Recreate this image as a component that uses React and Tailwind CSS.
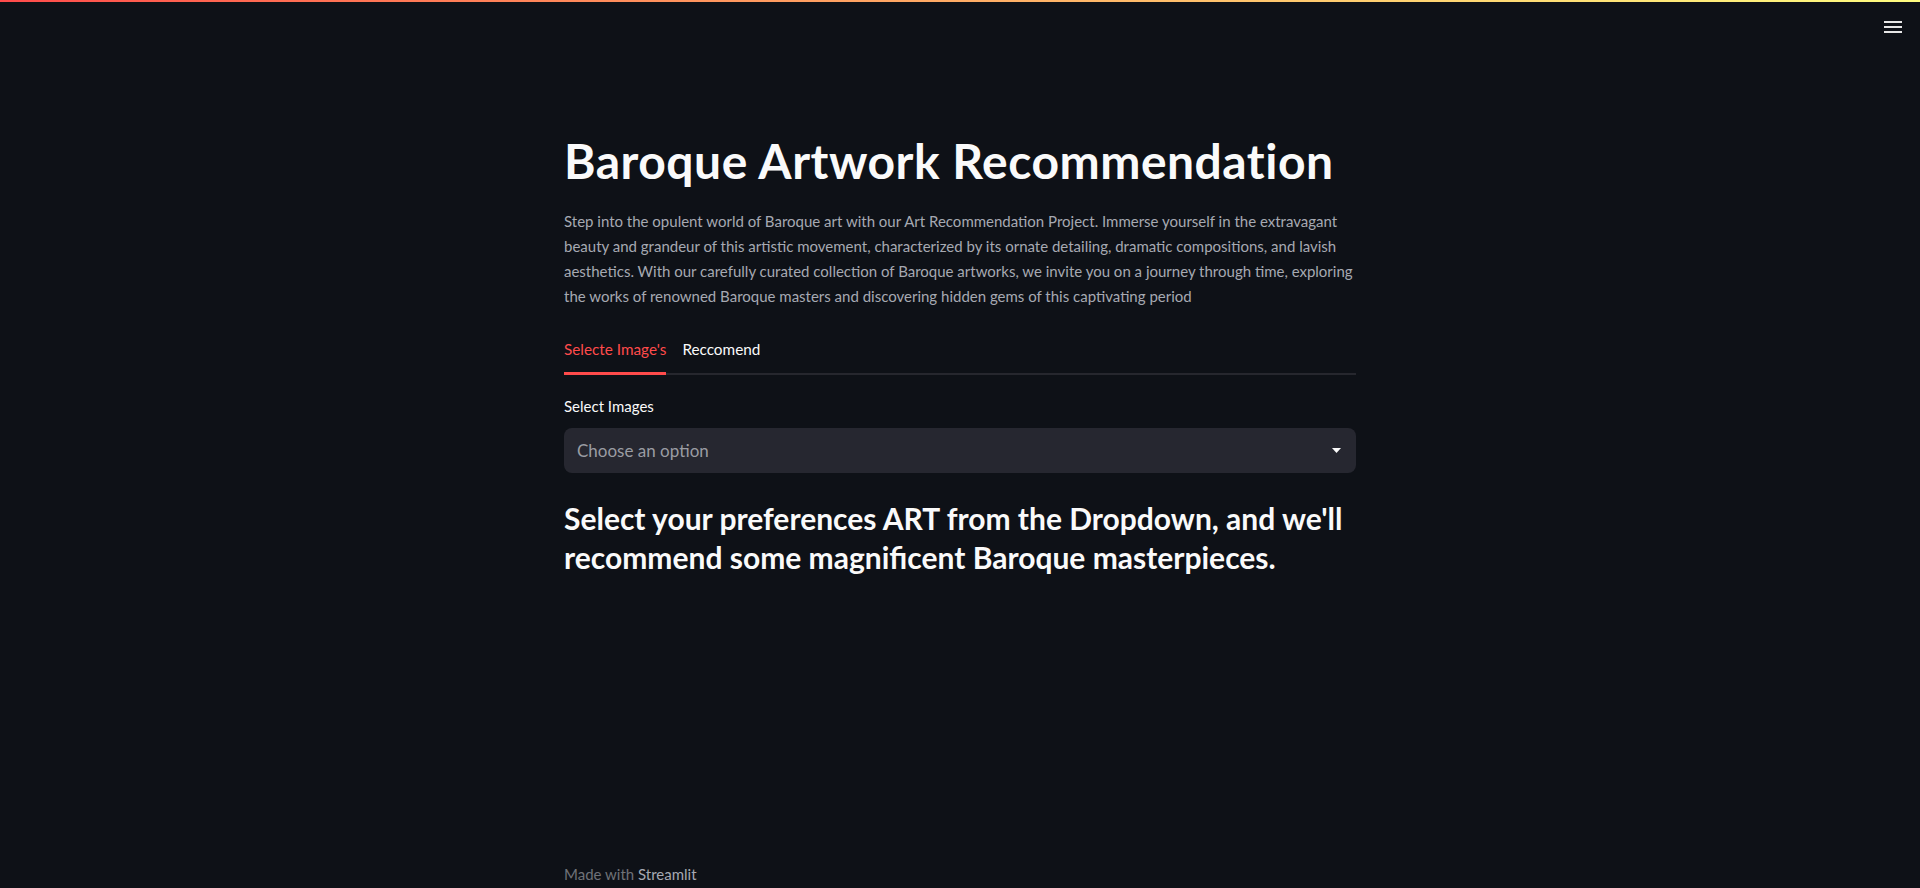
import React from "react";

export default function App() {
  const font = { fontFamily: "Lato, 'Noto Sans', sans-serif" };
  return (
    <div className="min-h-[888px] w-full bg-[#0e1117] text-[#fafafa] relative" style={font}>
      <div className="h-[2px] w-full bg-gradient-to-r from-[#ff4b4b] to-[#fffd80]" />
      <button className="absolute right-[18px] top-[21px] flex flex-col gap-[3px] w-[18px]">
        <span className="block h-[2px] w-[18px] bg-[#e6e6e6]" />
        <span className="block h-[2px] w-[18px] bg-[#e6e6e6]" />
        <span className="block h-[2px] w-[18px] bg-[#e6e6e6]" />
      </button>
      <main className="mx-auto w-[792px] pt-[131px] flex flex-col">
        <h1 className="text-[48px] font-bold leading-[56px] tracking-[0.5px] text-[#fafafa]">
          Baroque Artwork Recommendation
        </h1>
        <p className="mt-[20px] text-[15px] leading-[25px] text-[#a6a9b2]">
          Step into the opulent world of Baroque art with our Art Recommendation Project. Immerse yourself in the extravagant beauty and grandeur of this artistic movement, characterized by its ornate detailing, dramatic compositions, and lavish aesthetics. With our carefully curated collection of Baroque artworks, we invite you on a journey through time, exploring the works of renowned Baroque masters and discovering hidden gems of this captivating period
        </p>
        <div className="mt-[26px] relative flex gap-[16px] border-b-2 border-[#26272e] h-[40px]">
          <div className="relative h-full flex items-center pb-[10px] text-[15.3px] text-[#ff4b4b]">
            Selecte Image's
            <div className="absolute left-0 right-0 -bottom-[2px] h-[3px] bg-[#ff4b4b]" />
          </div>
          <div className="h-full flex items-center pb-[10px] text-[15.3px] text-[#fafafa]">Reccomend</div>
        </div>
        <label className="mt-[21px] text-[15px] leading-[20px] text-[#fafafa]">Select Images</label>
        <div className="mt-[12px] h-[45px] rounded-[8px] bg-[#262730] flex items-center justify-between pl-[13px] pr-[15px]">
          <span className="text-[17px] text-[#9a9ca3]">Choose an option</span>
          <svg width="9" height="6" viewBox="0 0 9 6">
            <path d="M0 0 L9 0 L4.5 5 Z" fill="#fafafa" />
          </svg>
        </div>
        <h3 className="mt-[26px] text-[30px] font-bold leading-[39px] text-[#fafafa]">
          Select your preferences ART from the Dropdown, and we'll recommend some magnificent Baroque masterpieces.
        </h3>
      </main>
      <footer className="absolute left-0 right-0 bottom-[4px]">
        <div className="mx-auto w-[792px] text-[15px] leading-[20px] text-[#6f7178]">
          Made with <span className="text-[#a6a9b2]">Streamlit</span>
        </div>
      </footer>
    </div>
  );
}
